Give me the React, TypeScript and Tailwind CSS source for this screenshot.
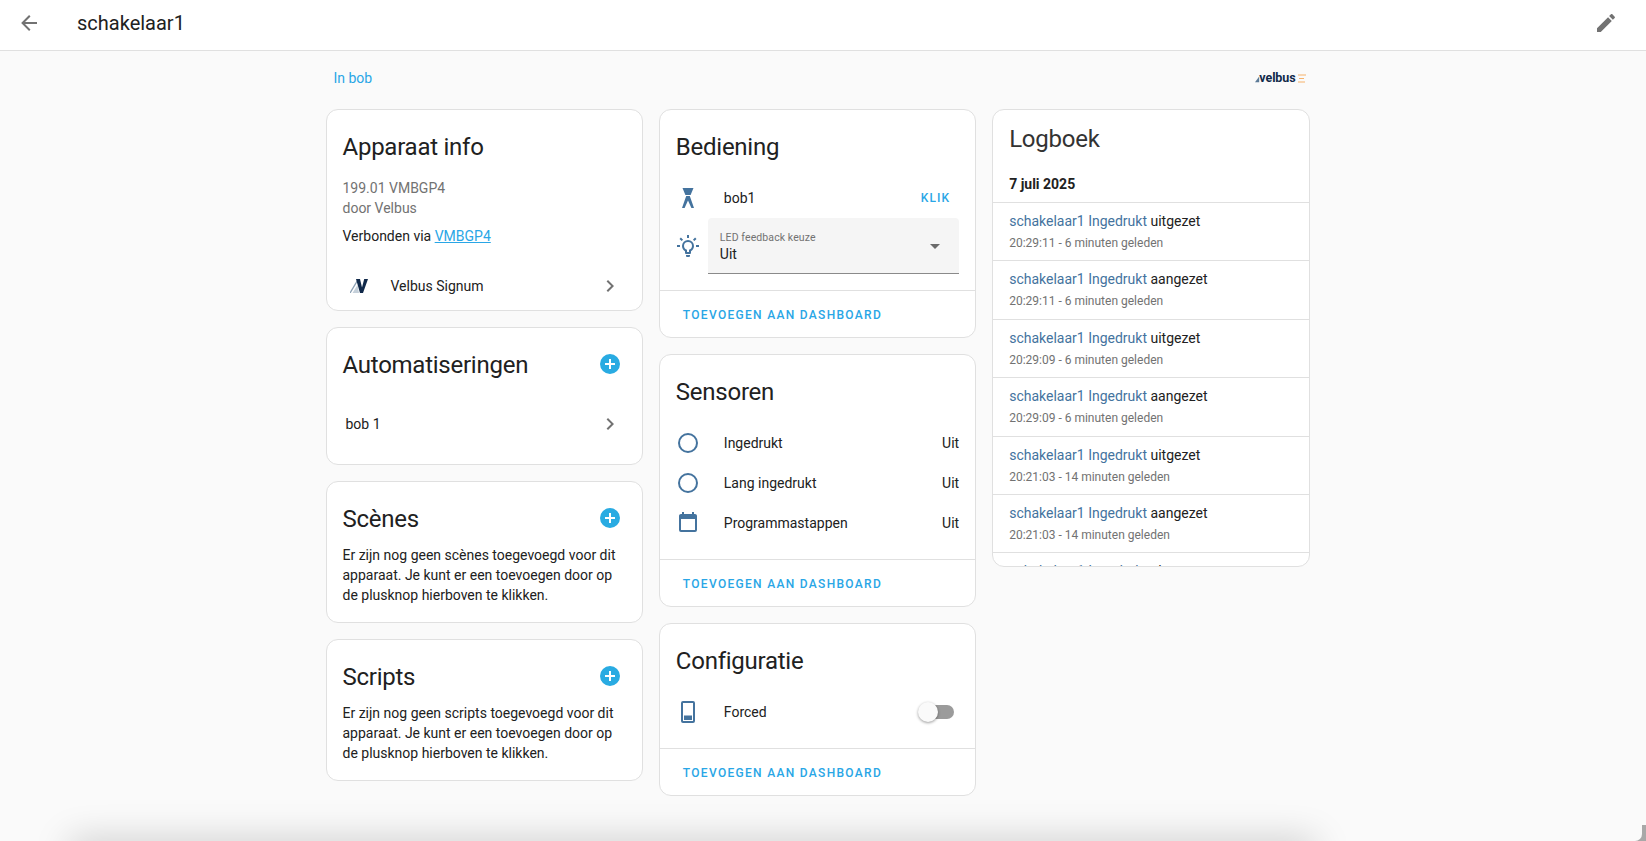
import React from "react";

const D = {
  back: "M20,11V13H8L13.5,18.5L12.08,19.92L4.16,12L12.08,4.08L13.5,5.5L8,11H20Z",
  pencil: "M20.71,7.04C21.1,6.65 21.1,6 20.71,5.63L18.37,3.29C18,2.9 17.35,2.9 16.96,3.29L15.12,5.12L18.87,8.87M3,17.25V21H6.75L17.81,9.93L14.06,6.18L3,17.25Z",
  chevron: "M8.59,16.58L13.17,12L8.59,7.41L10,6L16,12L10,18L8.59,16.58Z",
  plus: "M17,13H13V17H11V13H7V11H11V7H13V11H17M12,2A10,10 0 0,0 2,12A10,10 0 0,0 12,22A10,10 0 0,0 22,12A10,10 0 0,0 12,2Z",
  circle: "M12,20A8,8 0 0,1 4,12A8,8 0 0,1 12,4A8,8 0 0,1 20,12A8,8 0 0,1 12,20M12,2A10,10 0 0,0 2,12A10,10 0 0,0 12,22A10,10 0 0,0 22,12A10,10 0 0,0 12,2Z",
  calendar: "M19,19H5V8H19M16,1V3H8V1H6V3H5C3.89,3 3,3.89 3,5V19A2,2 0 0,0 5,21H19A2,2 0 0,0 21,19V5C21,3.89 20.1,3 19,3H18V1",
  bulb: "M20,11H23V13H20V11M1,11H4V13H1V11M13,1V4H11V1H13M4.92,3.5L7.05,5.64L5.63,7.05L3.5,4.93L4.92,3.5M16.95,5.63L19.07,3.5L20.5,4.93L18.37,7.05L16.95,5.63M12,6A6,6 0 0,1 18,12C18,14.22 16.79,16.16 15,17.2V19A1,1 0 0,1 14,20H10A1,1 0 0,1 9,19V17.2C7.21,16.16 6,14.22 6,12A6,6 0 0,1 12,6M14,21V22A1,1 0 0,1 13,23H11A1,1 0 0,1 10,22V21H14M11,18H13V15.87C14.73,15.43 16,13.86 16,12A4,4 0 0,0 12,8A4,4 0 0,0 8,12C8,13.86 9.27,15.43 11,15.87V18Z",
};

function Icon({ d, className }: { d: string; className: string }) {
  return (
    <svg viewBox="0 0 24 24" className={className} fill="currentColor">
      <path d={d} />
    </svg>
  );
}

function Card({ children }: { children: React.ReactNode }) {
  return (
    <div className="rounded-xl border border-[#e0e0e0] bg-white">{children}</div>
  );
}

function Title({ children, add }: { children: React.ReactNode; add?: boolean }) {
  return (
    <div className="flex items-center justify-between pl-4 pr-[20px] pt-[21px]">
      <h2 className="text-2xl leading-8 tracking-[-0.25px] text-[#212121]">{children}</h2>
      {add && <Icon d={D.plus} className="mb-[2px] h-6 w-6 text-[#29abe2]" />}
    </div>
  );
}

function Footer() {
  return (
    <div className="flex h-[47px] items-center border-t border-[#e0e0e0] pl-[23px] pt-px text-[12px] font-medium tracking-[1.3px] text-[#29a6e6]">
      TOEVOEGEN AAN DASHBOARD
    </div>
  );
}

function Row({ icon, label, value }: { icon: React.ReactNode; label: string; value?: React.ReactNode }) {
  return (
    <div className="flex h-10 items-center pl-4 pr-4 text-sm text-[#212121]">
      <div className="flex w-6 justify-center text-[#44739e]">{icon}</div>
      <span className="ml-6 flex-1">{label}</span>
      {value}
    </div>
  );
}

const log: [string, string][] = [
  ["uitgezet", "20:29:11 - 6 minuten geleden"],
  ["aangezet", "20:29:11 - 6 minuten geleden"],
  ["uitgezet", "20:29:09 - 6 minuten geleden"],
  ["aangezet", "20:29:09 - 6 minuten geleden"],
  ["uitgezet", "20:21:03 - 14 minuten geleden"],
  ["aangezet", "20:21:03 - 14 minuten geleden"],
  ["uitgezet", "20:21:03 - 14 minuten geleden"],
];

function EmptyText({ children }: { children: React.ReactNode }) {
  return <p className="mt-[10px] px-4 pb-[17px] text-sm leading-5 text-[#212121]">{children}</p>;
}

export default function App() {
  return (
    <div className="relative h-[841px] overflow-hidden bg-[#fafafa] font-['Roboto',sans-serif]">
      <header className="flex h-[51px] items-center justify-between border-b border-[#e0e0e0] bg-white pb-1 pl-[17px] pr-7">
        <div className="flex items-center">
          <Icon d={D.back} className="h-6 w-6 text-[#727272]" />
          <h1 className="ml-[36px] text-xl text-[#212121]">schakelaar1</h1>
        </div>
        <Icon d={D.pencil} className="h-6 w-6 text-[#727272]" />
      </header>

      <main className="pr-[11px]">
        <div className="mx-auto w-[984px]">
          <div className="flex h-[58px] items-center justify-between pb-1 pl-2 pr-[3px]">
            <a className="text-sm text-[#29a6e6]">In bob</a>
            <div className="flex items-center">
              <svg viewBox="0 0 6 8" className="mr-[-1px] mt-[1px] h-2 w-[5px]">
                <path d="M0,8L5,1L5,8Z" fill="#5c7a97" />
              </svg>
              <span className="text-[12.5px] font-bold leading-none tracking-[-0.1px] text-[#10294a]">velbus</span>
              <svg viewBox="0 0 9 9" className="ml-[2px] h-[9px] w-[9px]">
                <path d="M0,1H8M1,4.5H6M0,8H7" stroke="#f6b26b" strokeWidth="1" />
              </svg>
            </div>
          </div>

          <div className="grid grid-cols-3 items-start gap-x-4">
            <div className="flex flex-col gap-4">
              <Card>
                <Title>Apparaat info</Title>
                <div className="mt-[15px] px-4 text-sm leading-5 text-[#727272]">
                  <div>199.01 VMBGP4</div>
                  <div>door Velbus</div>
                  <div className="mt-2 text-[#212121]">
                    Verbonden via <a className="text-[#29a6e6] underline">VMBGP4</a>
                  </div>
                </div>
                <div className="mt-4 flex h-12 items-center pl-[23px] pr-[20px] text-sm text-[#212121]">
                  <svg viewBox="0 0 18 14" className="h-[14px] w-[18px]">
                    <path d="M0,14L7.5,1.5" stroke="#8ba0b4" strokeWidth="1.4" fill="none" />
                    <path d="M7.5,6L9,14H2.5Z" fill="#c5d0da" />
                    <path d="M6,0H10L12,8.5L14.2,0H18L13,14H10Z" fill="#10294a" />
                  </svg>
                  <span className="ml-[23px] flex-1">Velbus Signum</span>
                  <Icon d={D.chevron} className="h-6 w-6 text-[#727272]" />
                </div>
              </Card>

              <Card>
                <Title add>Automatiseringen</Title>
                <div className="mb-4 mt-[19px] flex h-12 items-center pl-[19px] pr-[20px] text-sm text-[#212121]">
                  <span className="flex-1">bob 1</span>
                  <Icon d={D.chevron} className="h-6 w-6 text-[#727272]" />
                </div>
              </Card>

              <Card>
                <Title add>Scènes</Title>
                <EmptyText>
                  Er zijn nog geen scènes toegevoegd voor dit apparaat. Je kunt er een toevoegen door op de plusknop hierboven te klikken.
                </EmptyText>
              </Card>

              <Card>
                <Title add>Scripts</Title>
                <EmptyText>
                  Er zijn nog geen scripts toegevoegd voor dit apparaat. Je kunt er een toevoegen door op de plusknop hierboven te klikken.
                </EmptyText>
              </Card>
            </div>

            <div className="flex flex-col gap-4">
              <Card>
                <Title>Bediening</Title>
                <div className="mt-[15px] pb-4">
                  <Row
                    icon={
                      <svg viewBox="0 0 12 20" className="h-5 w-3" fill="currentColor">
                        <path d="M0.5,0H11.5L8.6,7H3.4Z" />
                        <path d="M4.2,8H7.8L12,20H9.4L6,12.5L2.6,20H0Z" />
                      </svg>
                    }
                    label="bob1"
                    value={<span className="mr-[9px] pt-[2px] text-[12px] font-medium tracking-[1.07px] text-[#29a6e6]">KLIK</span>}
                  />
                  <div className="flex items-center pl-4 pr-4">
                    <Icon d={D.bulb} className="h-6 w-6 text-[#44739e]" />
                    <div className="relative ml-2 h-14 flex-1 rounded-t border-b border-[#8a8a8a] bg-[#f5f5f5] pl-3 pt-3">
                      <div className="text-[10.5px] leading-4 tracking-[0.1px] text-[#727272]">LED feedback keuze</div>
                      <div className="text-sm leading-4 text-[#212121]">Uit</div>
                      <div className="absolute right-[19px] top-[26px] h-0 w-0 border-x-[5px] border-t-[5px] border-x-transparent border-t-[#6b6b6b]" />
                    </div>
                  </div>
                </div>
                <Footer />
              </Card>

              <Card>
                <Title>Sensoren</Title>
                <div className="mt-[15px] pb-4">
                  <Row icon={<Icon d={D.circle} className="h-6 w-6" />} label="Ingedrukt" value={<span>Uit</span>} />
                  <Row icon={<Icon d={D.circle} className="h-6 w-6" />} label="Lang ingedrukt" value={<span>Uit</span>} />
                  <Row icon={<Icon d={D.calendar} className="h-6 w-6" />} label="Programmastappen" value={<span>Uit</span>} />
                </div>
                <Footer />
              </Card>

              <Card>
                <Title>Configuratie</Title>
                <div className="mt-[15px] pb-4">
                  <Row
                    icon={
                      <svg viewBox="0 0 14 22" className="h-[22px] w-[14px]" fill="none">
                        <rect x="1" y="1" width="12" height="20" rx="1" stroke="currentColor" strokeWidth="2" />
                        <rect x="3" y="14.5" width="8" height="4.5" fill="currentColor" />
                      </svg>
                    }
                    label="Forced"
                    value={
                      <div className="relative mr-[5px] h-3.5 w-[31px] rounded-full bg-[#9b9b9b]">
                        <div className="absolute left-[-5px] top-[-3px] h-5 w-5 rounded-full bg-[#fafafa] shadow-[0_1px_3px_rgba(0,0,0,0.4)]" />
                      </div>
                    }
                  />
                </div>
                <Footer />
              </Card>
            </div>

            <div className="h-[458px] overflow-hidden rounded-xl border border-[#e0e0e0] bg-white">
              <h2 className="pl-4 pt-[13px] text-2xl leading-8 tracking-[-0.25px] text-[#333333]">Logboek</h2>
              <div className="flex h-[47px] items-end pb-2 pl-4 text-sm font-bold leading-5 text-[#212121]">7 juli 2025</div>
              {log.map(([state, time], i) => (
                <div key={i} className="h-[58.4px] border-t border-[#e0e0e0] pl-4 pt-2">
                  <div className="text-sm leading-5 text-[#212121]">
                    <span className="text-[#44739e]">schakelaar1 Ingedrukt</span> {state}
                  </div>
                  <div className="mt-[2px] text-xs leading-5 text-[#727272]">{time}</div>
                </div>
              ))}
            </div>
          </div>
        </div>
      </main>

      <div className="absolute bottom-[-24px] left-[70px] h-6 w-[1245px] bg-[#c8c8c8] shadow-[0_0_36px_rgba(0,0,0,0.22)]" />
      <div className="absolute bottom-0 right-0 h-4 w-3 bg-[#a8a8a8]">
        <div className="h-full w-[8px] rounded-br-[7px] bg-[#fafafa]" />
      </div>
    </div>
  );
}
